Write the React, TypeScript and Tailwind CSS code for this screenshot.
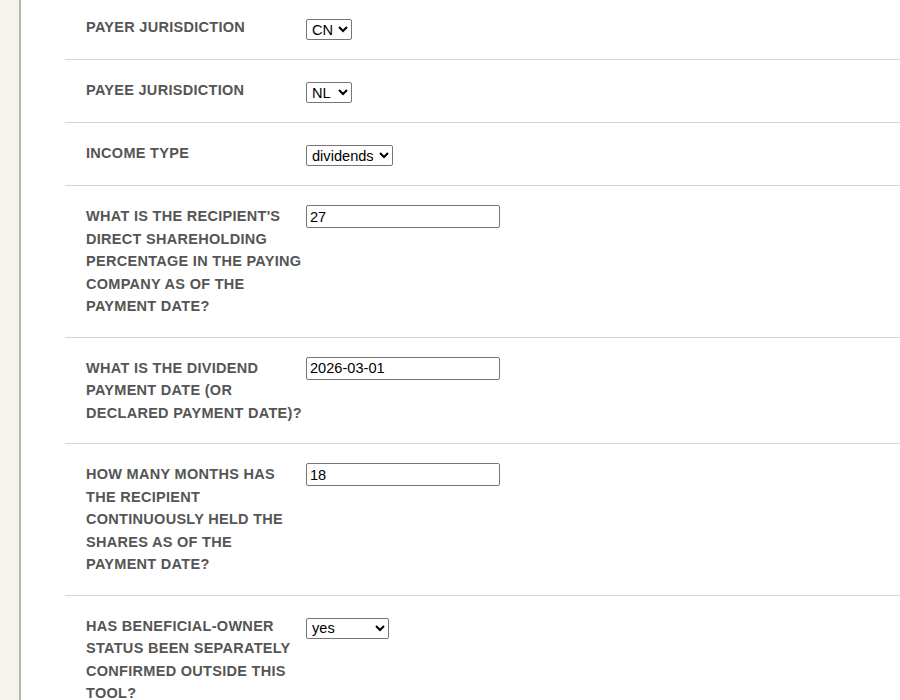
import React from "react";

type Field = {
  label: string;
  kind: "select" | "text";
  value: string;
  options?: string[];
  width: string;
};

const fields: Field[] = [
  { label: "Payer jurisdiction", kind: "select", value: "CN", options: ["CN", "HK", "SG"], width: "w-[46px]" },
  { label: "Payee jurisdiction", kind: "select", value: "NL", options: ["NL", "DE", "US"], width: "w-[46px]" },
  { label: "Income type", kind: "select", value: "dividends", options: ["dividends", "interest", "royalties"], width: "w-[87px]" },
  {
    label: "What is the recipient's direct shareholding percentage in the paying company as of the payment date?",
    kind: "text",
    value: "27",
    width: "w-[194px]",
  },
  {
    label: "What is the dividend payment date (or declared payment date)?",
    kind: "text",
    value: "2026-03-01",
    width: "w-[194px]",
  },
  {
    label: "How many months has the recipient continuously held the shares as of the payment date?",
    kind: "text",
    value: "18",
    width: "w-[194px]",
  },
  {
    label: "Has beneficial-owner status been separately confirmed outside this tool?",
    kind: "select",
    value: "yes",
    options: ["yes", "no"],
    width: "w-[83px]",
  },
];

const controlCls =
  "border border-[#767676] rounded-[2px] bg-white text-black text-[14.6px] leading-none font-['Liberation_Sans',Arial,sans-serif]";

export default function App() {
  return (
    <div className="flex min-h-[700px] bg-white font-['Liberation_Sans',Arial,sans-serif]">
      <div className="w-[21px] shrink-0 bg-[#f5f4ef] border-r-2 border-[#b4b3ac]" />
      <div className="flex-1 pl-[44px] -mt-[3px]">
        {fields.map((f) => (
          <div key={f.label} className="flex items-start px-[21px] py-[19px] border-b border-[#d6d4cd]">
            <label className="w-[220px] shrink-0 text-[14.5px] leading-[22.5px] font-bold uppercase tracking-[0.02em] text-[#555555]">
              {f.label}
            </label>
            <div className="flex">
              {f.kind === "select" ? (
                <select defaultValue={f.value} className={`${controlCls} ${f.width} h-[21px] mt-[3px] pl-[1px]`}>
                  {f.options!.map((o) => (
                    <option key={o} value={o}>
                      {o}
                    </option>
                  ))}
                </select>
              ) : (
                <input type="text" defaultValue={f.value} className={`${controlCls} ${f.width} h-[23px] px-[3px]`} />
              )}
            </div>
          </div>
        ))}
      </div>
    </div>
  );
}
